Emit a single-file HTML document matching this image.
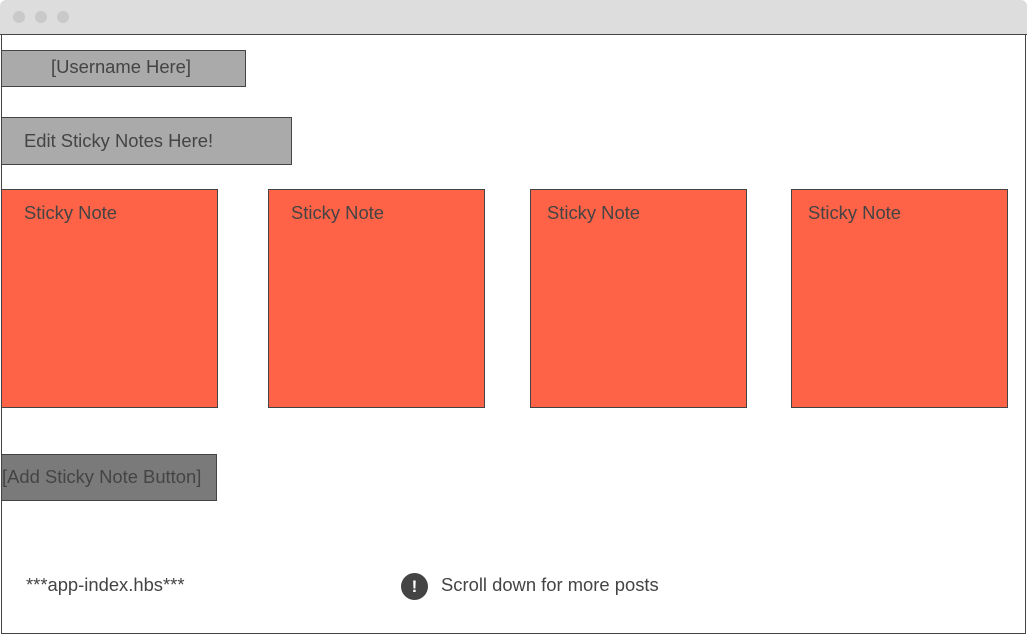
<!DOCTYPE html>
<html><head><style>
*{margin:0;padding:0;box-sizing:border-box}
body{width:1027px;height:636px;background:#fff;position:relative;overflow:hidden;font-family:"Liberation Sans",sans-serif;color:#444;font-size:18.4px}
.tb{position:absolute;left:0;top:0;width:1027px;height:35px;background:#dddddd;border-radius:6px 6px 0 0;border-bottom:1px solid #444}
.dot{position:absolute;top:11px;width:12px;height:12px;border-radius:50%;background:#c9c9c9}
.frame{position:absolute;left:1px;top:34px;width:1025px;height:600px;border:1px solid #444;border-top:none}
.b{position:absolute;border:1px solid #444}
.g{background:#aaaaaa}
.n{background:#ff6347;padding:12px 0 0 22px}
.t{position:absolute}
</style></head><body>
<div class="tb"><div class="dot" style="left:13px"></div><div class="dot" style="left:35px"></div><div class="dot" style="left:57px"></div></div>
<div class="frame"></div>
<div class="b g" style="left:1px;top:50px;width:245px;height:37px;line-height:32px;padding-left:49px">[Username Here]</div>
<div class="b g" style="left:1px;top:117px;width:291px;height:48px;line-height:45px;padding-left:22px">Edit Sticky Notes Here!</div>
<div class="b n" style="left:1px;top:189px;width:217px;height:219px">Sticky Note</div>
<div class="b n" style="left:268px;top:189px;width:217px;height:219px">Sticky Note</div>
<div class="b n" style="left:530px;top:189px;width:217px;height:219px;padding-left:16px">Sticky Note</div>
<div class="b n" style="left:791px;top:189px;width:217px;height:219px;padding-left:16px">Sticky Note</div>
<div class="b" style="left:1px;top:454px;width:216px;height:47px;background:#7a7a7a;line-height:44px;white-space:nowrap">[Add Sticky Note Button]</div>
<div class="t" style="left:26px;top:574px">***app-index.hbs***</div>
<div class="t" style="left:401px;top:573px;width:27px;height:27px;border-radius:50%;background:#444;color:#fff;text-align:center;line-height:27px;font-weight:bold;font-size:17px">!</div>
<div class="t" style="left:441px;top:574px">Scroll down for more posts</div>
</body></html>
